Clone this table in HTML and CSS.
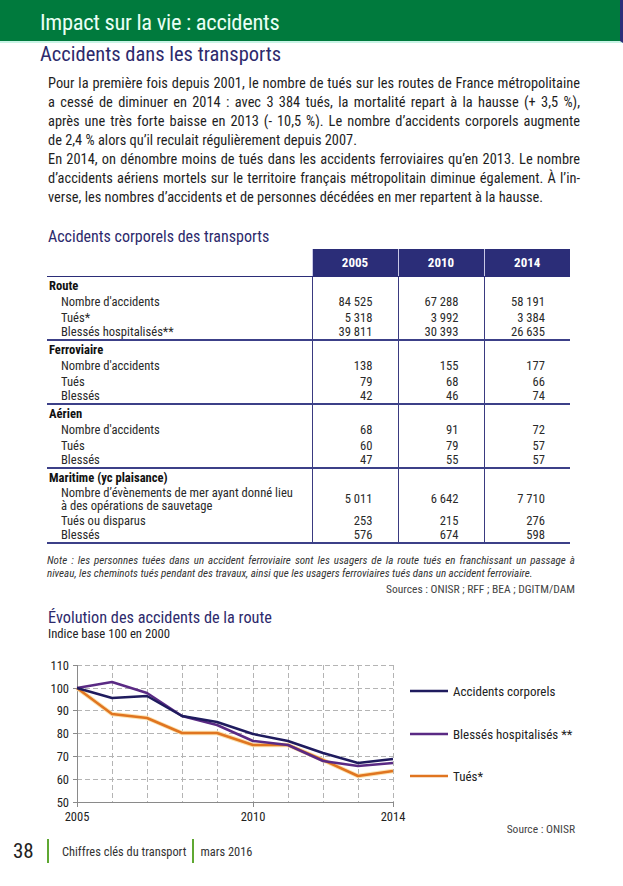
FILE: index.html
```html
<!DOCTYPE html>
<html lang="fr">
<head>
<meta charset="utf-8">
<title>Impact sur la vie : accidents</title>
<link rel="stylesheet" href="styles.css">
</head>
<body>
<header class="band"><h1 class="band-title">Impact sur la vie : accidents</h1></header>
<main class="page">
  <h2 class="section-title">Accidents dans les transports</h2>
  <p class="lead"><span class="ln">Pour la première fois depuis 2001, le nombre de tués sur les routes de France métropolitaine</span><span class="ln">a cessé de diminuer en 2014 : avec 3 384 tués, la mortalité repart à la hausse (+ 3,5 %),</span><span class="ln">après une très forte baisse en 2013 (- 10,5 %). Le nombre d’accidents corporels augmente</span>de 2,4 % alors qu’il reculait régulièrement depuis 2007.</p>
  <p class="lead">En 2014, on dénombre moins de tués dans les accidents ferroviaires qu’en 2013. Le nombre d’accidents aériens mortels sur le territoire français métropolitain diminue également. À l’in&shy;verse, les nombres d’accidents et de personnes décédées en mer repartent à la hausse.</p>

  <h3 class="block-title">Accidents corporels des transports</h3>
  <table class="data">
    <colgroup><col class="c-label"><col class="c-num"><col class="c-num"><col class="c-num"></colgroup>
    <thead>
      <tr><th class="blank"></th><th>2005</th><th>2010</th><th>2014</th></tr>
    </thead>
    <tbody>
      <tr><td class="grp">Route</td><td></td><td></td><td></td></tr>
      <tr><td class="sub">Nombre d'accidents</td><td>84 525</td><td>67 288</td><td>58 191</td></tr>
      <tr><td class="sub">Tués*</td><td>5 318</td><td>3 992</td><td>3 384</td></tr>
      <tr class="last"><td class="sub">Blessés hospitalisés**</td><td>39 811</td><td>30 393</td><td>26 635</td></tr>
    </tbody>
    <tbody>
      <tr><td class="grp">Ferroviaire</td><td></td><td></td><td></td></tr>
      <tr><td class="sub">Nombre d'accidents</td><td>138</td><td>155</td><td>177</td></tr>
      <tr><td class="sub">Tués</td><td>79</td><td>68</td><td>66</td></tr>
      <tr class="last"><td class="sub">Blessés</td><td>42</td><td>46</td><td>74</td></tr>
    </tbody>
    <tbody>
      <tr><td class="grp">Aérien</td><td></td><td></td><td></td></tr>
      <tr><td class="sub">Nombre d'accidents</td><td>68</td><td>91</td><td>72</td></tr>
      <tr><td class="sub">Tués</td><td>60</td><td>79</td><td>57</td></tr>
      <tr class="last"><td class="sub">Blessés</td><td>47</td><td>55</td><td>57</td></tr>
    </tbody>
    <tbody>
      <tr><td class="grp">Maritime (yc plaisance)</td><td></td><td></td><td></td></tr>
      <tr class="tall"><td class="sub">Nombre d’évènements de mer ayant donné lieu<br>à des opérations de sauvetage</td><td>5 011</td><td>6 642</td><td>7 710</td></tr>
      <tr><td class="sub">Tués ou disparus</td><td>253</td><td>215</td><td>276</td></tr>
      <tr class="last"><td class="sub">Blessés</td><td>576</td><td>674</td><td>598</td></tr>
    </tbody>
  </table>
  <p class="note">Note : les personnes tuées dans un accident ferroviaire sont les usagers de la route tués en franchissant un passage à niveau, les cheminots tués pendant des travaux, ainsi que les usagers ferroviaires tués dans un accident ferroviaire.</p>
  <p class="source">Sources : ONISR ; RFF ; BEA ; DGITM/DAM</p>

  <h3 class="block-title chart-title">Évolution des accidents de la route</h3>
  <p class="chart-sub">Indice base 100 en 2000</p>
  <svg class="chart" width="560" height="172" viewBox="0 0 560 172" xmlns="http://www.w3.org/2000/svg">
    <g class="grid" stroke="#b4b4b4" stroke-width="1" stroke-dasharray="5 3" fill="none">
      <line x1="37" y1="14.5" x2="353" y2="14.5"/>
      <line x1="37" y1="37.5" x2="353" y2="37.5"/>
      <line x1="37" y1="59.5" x2="353" y2="59.5"/>
      <line x1="37" y1="82.5" x2="353" y2="82.5"/>
      <line x1="37" y1="105.5" x2="353" y2="105.5"/>
      <line x1="37" y1="128.5" x2="353" y2="128.5"/>
      <line x1="72.5" y1="14" x2="72.5" y2="151"/>
      <line x1="107.5" y1="14" x2="107.5" y2="151"/>
      <line x1="142.5" y1="14" x2="142.5" y2="151"/>
      <line x1="177.5" y1="14" x2="177.5" y2="151"/>
      <line x1="213.5" y1="14" x2="213.5" y2="151"/>
      <line x1="248.5" y1="14" x2="248.5" y2="151"/>
      <line x1="283.5" y1="14" x2="283.5" y2="151"/>
      <line x1="318.5" y1="14" x2="318.5" y2="151"/>
      <line x1="353.5" y1="14" x2="353.5" y2="151"/>
    </g>
    <g stroke="#8a8a8a" stroke-width="1" fill="none">
      <line x1="37.5" y1="14" x2="37.5" y2="151"/>
      <line x1="33" y1="151.5" x2="353" y2="151.5"/>
      <line x1="33" y1="14.5" x2="37" y2="14.5"/>
      <line x1="33" y1="37.5" x2="37" y2="37.5"/>
      <line x1="33" y1="59.5" x2="37" y2="59.5"/>
      <line x1="33" y1="82.5" x2="37" y2="82.5"/>
      <line x1="33" y1="105.5" x2="37" y2="105.5"/>
      <line x1="33" y1="128.5" x2="37" y2="128.5"/>
      <line x1="37.5" y1="151" x2="37.5" y2="156"/>
      <line x1="213.5" y1="151" x2="213.5" y2="156"/>
      <line x1="353.5" y1="151" x2="353.5" y2="156"/>
    </g>
    <g class="ylab" text-anchor="end">
      <text x="29" y="18.5">110</text>
      <text x="29" y="41.5">100</text>
      <text x="29" y="63.5">90</text>
      <text x="29" y="86.5">80</text>
      <text x="29" y="109.5">70</text>
      <text x="29" y="132.5">60</text>
      <text x="29" y="155.5">50</text>
    </g>
    <g class="xlab" text-anchor="middle">
      <text x="37" y="170">2005</text>
      <text x="213" y="170">2010</text>
      <text x="353" y="170">2014</text>
    </g>
    <polyline fill="none" stroke="#fbe2b0" stroke-width="4.5" stroke-linejoin="round"
      points="37,37 72,63 107,67 142,82 177,82 213,94 248,94 283,109 318,125 353,120"/>
    <polyline fill="none" stroke="#e07520" stroke-width="2.5" stroke-linejoin="round"
      points="37,37 72,63 107,67 142,82 177,82 213,94 248,94 283,109 318,125 353,120"/>
    <polyline fill="none" stroke="#5a2a84" stroke-width="2.5" stroke-linejoin="round"
      points="37,37 72,31 107,42 142,65 177,74 213,90 248,94 283,110 318,115 353,112"/>
    <polyline fill="none" stroke="#1f1b5e" stroke-width="2.5" stroke-linejoin="round"
      points="37,37 72,47 107,45 142,65 177,71 213,83 248,90 283,102 318,112 353,108"/>
    <g class="legend">
      <line x1="370" y1="40" x2="408" y2="40" stroke="#1f1b5e" stroke-width="2.5"/>
      <text x="413" y="44.5">Accidents corporels</text>
      <line x1="370" y1="83" x2="408" y2="83" stroke="#5a2a84" stroke-width="2.5"/>
      <text x="413" y="87.5">Blessés hospitalisés **</text>
      <line x1="370" y1="125" x2="408" y2="125" stroke="#e07520" stroke-width="2.5"/>
      <text x="413" y="129.5">Tués*</text>
    </g>
  </svg>
  <p class="source chart-source">Source : ONISR</p>
</main>
<footer class="foot">
  <span class="pageno">38</span>
  <span class="bar"></span>
  <span class="foot-text">Chiffres clés du transport</span>
  <span class="bar"></span>
  <span class="foot-text">mars 2016</span>
</footer>
</body>
</html>
```

FILE: styles.css
```css
html, body {
  margin: 0;
  padding: 0;
  background: #ffffff;
}
body {
  width: 623px;
  height: 886px;
  overflow: hidden;
  font-family: "Roboto Condensed", "Liberation Sans", sans-serif;
  color: #1e1e1e;
}
.band {
  height: 41px;
  background: #007a3d;
  border-right: 3px solid #2b2f7a;
  border-bottom: 2px solid #c9f4e6;
}
.band-title {
  margin: 0;
  padding-left: 40px;
  font-size: 22.5px;
  letter-spacing: -0.3px;
  font-weight: normal;
  line-height: 44px;
  color: #e9fff5;
}
.page {
  padding: 0 48px 0 47px;
}
.section-title {
  margin: 0 0 0 -7px;
  font-size: 20.5px;
  font-weight: normal;
  line-height: 22px;
  color: #2d2a6c;
}
.lead {
  margin: 0 0 0 1px;
  font-size: 14.4px;
  line-height: 19px;
  text-align: justify;
  color: #1e1e1e;
  width: 532px;
}
.lead:first-of-type {
  margin-top: 9px;
}
.ln {
  display: block;
  text-align: justify;
  text-align-last: justify;
}
.block-title {
  margin: 21px 0 0 1px;
  font-size: 16px;
  font-weight: normal;
  line-height: 18px;
  color: #2d2a6c;
}
.data {
  margin-top: 3px;
  border-collapse: collapse;
  table-layout: fixed;
  width: 523px;
  font-size: 12.6px;
  color: #2a2a2a;
}
.c-label { width: 265px; }
.c-num { width: 86px; }
.data th {
  height: 27px;
  padding: 0;
  background: #2b2d78;
  color: #ffffff;
  font-size: 13px;
  font-weight: bold;
  text-align: center;
  border-left: 1px solid #c8c8e6;
  border-bottom: 1px solid #2b2d78;
}
.data th.blank {
  background: transparent;
  border-left: 0;
  border-bottom: 1px solid #2b2d78;
}
.data td {
  height: 16px;
  padding: 0 25px 0 0;
  line-height: 15px;
  text-align: right;
  border-left: 1px solid #3a3a80;
  vertical-align: middle;
}
.data td:first-child {
  border-left: 0;
  text-align: left;
  padding: 0;
}
.data td.grp {
  font-weight: bold;
  padding-left: 2px;
  color: #111;
}
.data td.sub {
  padding-left: 14px;
}
.data tr.last td {
  height: 14px;
  line-height: 14px;
  border-bottom: 2px solid #3c4088;
}
.data tr.tall td {
  height: 27px;
}
.data tr.tall td.sub {
  line-height: 13px;
}
.note {
  margin: 10px 0 0;
  font-size: 11px;
  line-height: 13px;
  font-style: italic;
  text-align: justify;
  color: #333;
  width: 528px;
}
.source {
  margin: 3px 0 0;
  width: 528px;
  font-size: 11.5px;
  line-height: 13px;
  text-align: right;
  color: #444;
}
.chart-title {
  margin-top: 13px;
  font-size: 16.3px;
}
.chart-sub {
  margin: 0 0 0 1px;
  font-size: 12.7px;
  line-height: 14px;
  color: #222;
}
.chart {
  display: block;
  overflow: visible;
  margin: 10px 0 0 -7px;
  font-family: "Roboto Condensed", "Liberation Sans", sans-serif;
}
.chart .ylab text,
.chart .xlab text {
  font-size: 12.5px;
  fill: #222;
}
.chart .legend text {
  font-size: 13px;
  fill: #222;
}
.chart-source {
  margin-top: 0;
}
.foot {
  display: flex;
  align-items: center;
  height: 24px;
  margin-top: 3px;
  padding-left: 13px;
}
.pageno {
  font-size: 21px;
  color: #222;
  width: 34px;
}
.bar {
  width: 2px;
  height: 24px;
  background: #5fa832;
}
.foot-text {
  font-size: 12.4px;
  color: #333;
  padding: 0 6px 0 13px;
}
.foot-text:last-child {
  padding-left: 6px;
}
```
